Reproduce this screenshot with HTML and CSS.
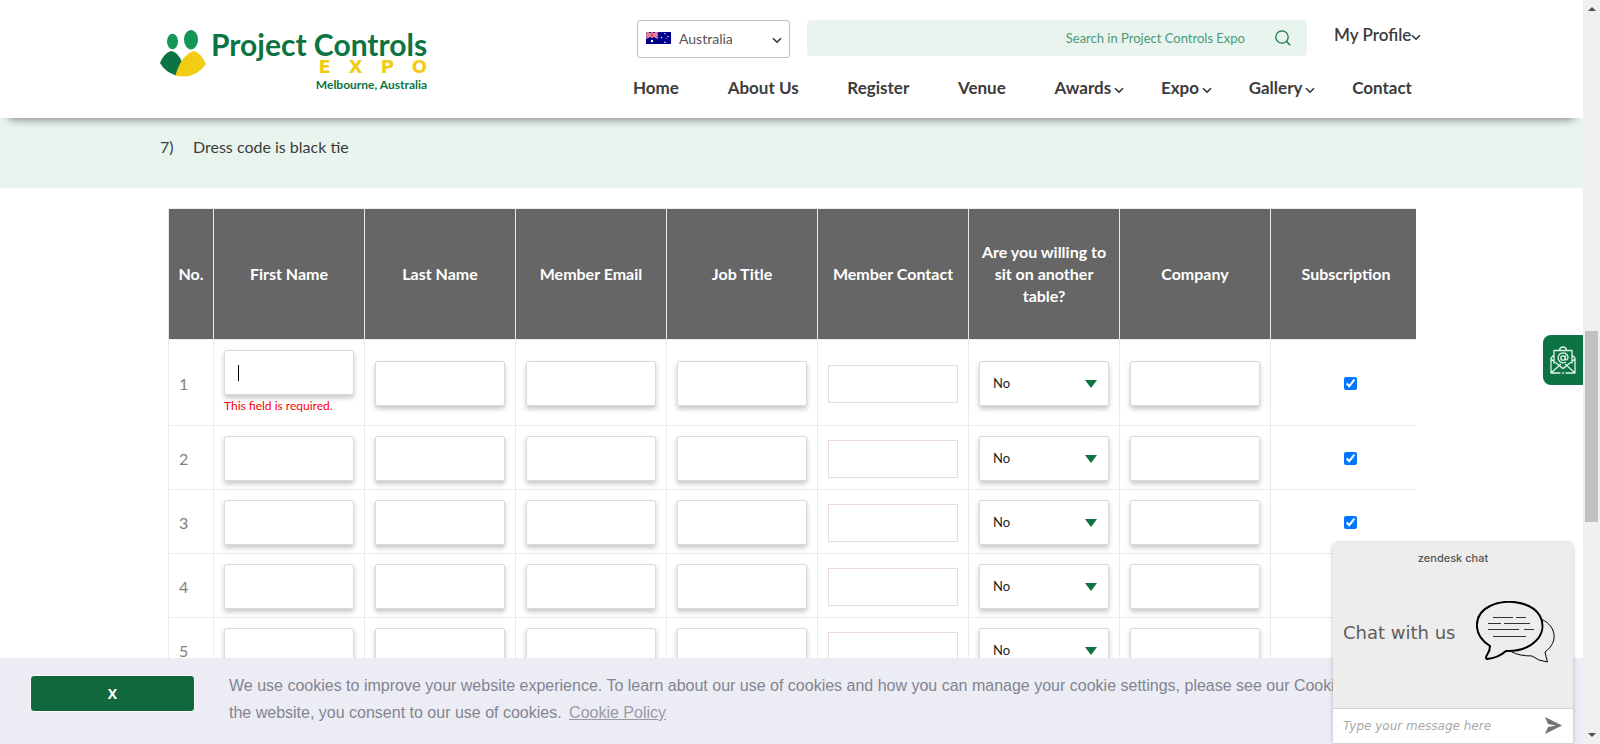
FILE: index.html
```html
<!DOCTYPE html>
<html lang="en">
<head>
<meta charset="utf-8">
<title>Project Controls Expo - Melbourne, Australia</title>
<link rel="stylesheet" href="styles.css">
</head>
<body>
<svg class="symbols" aria-hidden="true">
  <symbol id="chevron" viewBox="0 0 10 7"><path d="M1 1.2 5 5.2 9 1.2" fill="none" stroke="currentColor" stroke-width="1.6"/></symbol>
</svg>
<div class="page">
  <header class="header">
    <a class="logo" href="#">
      <svg class="logo-mark" viewBox="0 0 46 48" aria-hidden="true">
        <ellipse cx="12.5" cy="11.5" rx="5.5" ry="7.7" fill="#149657"/>
        <ellipse cx="31" cy="9.7" rx="7" ry="9.7" fill="#149657"/>
        <path d="M0 33Q4 23 11 21Q18 22 22 32L16 45.500Q5 42 0 33Z" fill="#0c7442"/>
        <path d="M15.500 45.500Q21 25 34 21Q41 23 46 34Q35 50 15.500 45.500Z" fill="#f2cb13"/>
      </svg>
      <span class="logo-text">
        <span class="logo-name">Project Controls</span>
        <span class="logo-expo"><span>E</span><span>X</span><span>P</span><span>O</span></span>
        <span class="logo-city">Melbourne, Australia</span>
      </span>
    </a>
    <div class="header-main">
      <div class="tools">
        <div class="country">
          <svg class="flag" viewBox="0 0 25 12" aria-hidden="true">
            <rect width="25" height="12" fill="#00008b"/>
            <path d="M0 0 12 6M12 0 0 6" stroke="#fff" stroke-width="1.600"/>
            <path d="M0 0 12 6M12 0 0 6" stroke="#e4002b" stroke-width=".7"/>
            <path d="M6 0V6M0 3H12" stroke="#fff" stroke-width="2.200"/>
            <path d="M6 0V6M0 3H12" stroke="#e4002b" stroke-width="1.200"/>
            <circle cx="6" cy="9" r="1.200" fill="#fff"/>
            <g fill="#fff"><circle cx="19" cy="1.800" r=".7"/><circle cx="15.500" cy="5.500" r=".7"/><circle cx="22" cy="4.500" r=".7"/><circle cx="19" cy="10.300" r=".8"/><circle cx="20.300" cy="6.500" r=".4"/></g>
          </svg>
          <select class="country-select" aria-label="Country"><option>Australia</option></select>
          <svg class="country-chevron chevron" aria-hidden="true"><use href="#chevron"/></svg>
        </div>
        <form class="search">
          <input class="search-input" type="text" placeholder="Search in Project Controls Expo" aria-label="Search">
          <button class="search-button" type="button" aria-label="Search">
            <svg viewBox="0 0 16 16" width="16" height="16"><circle cx="7" cy="7" r="6.200" fill="none" stroke="#0c7442" stroke-width="1.200"/><path d="M11.500 11.500 15.300 15.300" stroke="#0c7442" stroke-width="1.300"/></svg>
          </button>
        </form>
        <a class="profile" href="#">My Profile<svg class="chevron"><use href="#chevron"/></svg></a>
      </div>
      <nav class="nav">
        <a href="#">Home</a>
        <a href="#">About Us</a>
        <a href="#">Register</a>
        <a href="#">Venue</a>
        <a class="has-menu" href="#">Awards<svg class="chevron"><use href="#chevron"/></svg></a>
        <a class="has-menu" href="#">Expo<svg class="chevron"><use href="#chevron"/></svg></a>
        <a class="has-menu" href="#">Gallery<svg class="chevron"><use href="#chevron"/></svg></a>
        <a href="#">Contact</a>
      </nav>
    </div>
  </header>

  <section class="notes">
    <ol class="notes-list"><li><span class="notes-number">7)</span>Dress code is black tie</li></ol>
  </section>

  <main class="content">
    <table class="members">
      <colgroup><col class="col-no"><col class="col-field" span="7"><col></colgroup>
      <thead>
        <tr><th>No.</th><th>First Name</th><th>Last Name</th><th>Member Email</th><th>Job Title</th><th>Member Contact</th><th>Are you willing to sit on another table?</th><th>Company</th><th class="subscribe-head">Subscription</th></tr>
      </thead>
      <tbody>
        <tr>
          <td>1</td>
          <td><div class="focused"><input class="field" type="text" aria-label="First name 1" aria-describedby="error-1"><span class="caret"></span></div><p class="error" id="error-1">This field is required.</p></td>
          <td><input class="field" type="text" aria-label="Last name 1"></td>
          <td><input class="field" type="email" aria-label="Member email 1"></td>
          <td><input class="field" type="text" aria-label="Job title 1"></td>
          <td><input class="contact" type="tel" aria-label="Member contact 1"></td>
          <td><div class="choice"><select class="field" aria-label="Sit on another table 1"><option>No</option><option>Yes</option></select></div></td>
          <td><input class="field" type="text" aria-label="Company 1"></td>
          <td class="subscribe"><input type="checkbox" checked aria-label="Subscription 1"></td>
        </tr>
        <tr>
          <td>2</td>
          <td><input class="field" type="text" aria-label="First name 2"></td>
          <td><input class="field" type="text" aria-label="Last name 2"></td>
          <td><input class="field" type="email" aria-label="Member email 2"></td>
          <td><input class="field" type="text" aria-label="Job title 2"></td>
          <td><input class="contact" type="tel" aria-label="Member contact 2"></td>
          <td><div class="choice"><select class="field" aria-label="Sit on another table 2"><option>No</option><option>Yes</option></select></div></td>
          <td><input class="field" type="text" aria-label="Company 2"></td>
          <td class="subscribe"><input type="checkbox" checked aria-label="Subscription 2"></td>
        </tr>
        <tr>
          <td>3</td>
          <td><input class="field" type="text" aria-label="First name 3"></td>
          <td><input class="field" type="text" aria-label="Last name 3"></td>
          <td><input class="field" type="email" aria-label="Member email 3"></td>
          <td><input class="field" type="text" aria-label="Job title 3"></td>
          <td><input class="contact" type="tel" aria-label="Member contact 3"></td>
          <td><div class="choice"><select class="field" aria-label="Sit on another table 3"><option>No</option><option>Yes</option></select></div></td>
          <td><input class="field" type="text" aria-label="Company 3"></td>
          <td class="subscribe"><input type="checkbox" checked aria-label="Subscription 3"></td>
        </tr>
        <tr>
          <td>4</td>
          <td><input class="field" type="text" aria-label="First name 4"></td>
          <td><input class="field" type="text" aria-label="Last name 4"></td>
          <td><input class="field" type="email" aria-label="Member email 4"></td>
          <td><input class="field" type="text" aria-label="Job title 4"></td>
          <td><input class="contact" type="tel" aria-label="Member contact 4"></td>
          <td><div class="choice"><select class="field" aria-label="Sit on another table 4"><option>No</option><option>Yes</option></select></div></td>
          <td><input class="field" type="text" aria-label="Company 4"></td>
          <td class="subscribe"><input type="checkbox" checked aria-label="Subscription 4"></td>
        </tr>
        <tr>
          <td>5</td>
          <td><input class="field" type="text" aria-label="First name 5"></td>
          <td><input class="field" type="text" aria-label="Last name 5"></td>
          <td><input class="field" type="email" aria-label="Member email 5"></td>
          <td><input class="field" type="text" aria-label="Job title 5"></td>
          <td><input class="contact" type="tel" aria-label="Member contact 5"></td>
          <td><div class="choice"><select class="field" aria-label="Sit on another table 5"><option>No</option><option>Yes</option></select></div></td>
          <td><input class="field" type="text" aria-label="Company 5"></td>
          <td class="subscribe"><input type="checkbox" checked aria-label="Subscription 5"></td>
        </tr>
      </tbody>
    </table>
  </main>

  <button class="mail-tab" type="button" aria-label="Subscribe by email">
    <svg viewBox="0 0 26 29" width="26" height="29" fill="none" stroke="#e2f2ea" stroke-width="1.300" stroke-linejoin="round" stroke-linecap="round">
      <path d="M4 17V4.500H22V17M9.500 4Q10 1 13 1T16.500 4M4 9 1 12V27H10M16 27H25V12L22 9M1 13 10.500 20.500M25 13 15.500 20.500M1.500 26.500 10.500 18.500M24.500 26.500 15.500 18.500M10.500 20.500Q13 24 15.500 20.500M12.500 27H13.500"/>
      <circle cx="13" cy="12" r="2.200"/><path d="M15.200 9.800V12.500Q15.500 14.300 17 13.700Q18.300 12.500 18 11A5 5 0 1 0 15.500 16.300"/>
    </svg>
  </button>

  <div class="cookies">
    <button class="cookies-close" type="button">X</button>
    <p class="cookies-text">We use cookies to improve your website experience. To learn about our use of cookies and how you can manage your cookie settings, please see our Cookie Policy. By continuing to use the website, you consent to our use of cookies. <a class="cookies-link" href="#">Cookie Policy</a></p>
  </div>

  <aside class="chat">
    <div class="chat-brand">zendesk chat</div>
    <div class="chat-body">
      <span>Chat with us</span>
      <svg viewBox="0 0 80 64" width="80" height="64" fill="none" stroke="#000" aria-hidden="true">
        <path d="M66 18.500C80 25 83 41 69 51Q70 56 71.500 61Q62 60 56 55Q43 55 35 50.500" stroke-width="1"/>
        <path d="M14 45C-4 34-3 13 14 5C31-3 56 1 64 15C73 33 56 51 30 50Q22 57 11 58Q9 57 11 54Q14 50 14 45Z" stroke-width="2" fill="#ededed"/>
        <path d="M17 16.500H37M40 16.500H50M12 22.500H25M28 22.500H54M12 28.500H43M48 28.500H58M17 35.500H50" stroke-width="1.200" stroke="#333"/>
      </svg>
    </div>
    <form class="chat-form">
      <input class="chat-input" type="text" placeholder="Type your message here" aria-label="Message">
      <button class="chat-send" type="button" aria-label="Send"><svg viewBox="0 0 17 17" width="17" height="17"><path d="M0 0 17 8.500 0 17 3 10 11 8.500 3 7Z" fill="#737373"/></svg></button>
    </form>
  </aside>
</div>
<div class="scrollbar" aria-hidden="true">
  <span class="arrow arrow-up"></span>
  <span class="thumb"></span>
  <span class="arrow arrow-down"></span>
</div>
</body>
</html>
```

FILE: styles.css
```css
* { box-sizing: border-box; }
body {
  margin: 0;
  display: flex;
  height: 100vh;
  overflow: hidden;
  background: #fff;
  color: #3c3c3c;
  font-family: Lato, "Liberation Sans", sans-serif;
  font-size: 16px;
}
a { color: inherit; text-decoration: none; }
input, select, button { font-family: inherit; margin: 0; }
.symbols { display: none; }
.page { position: relative; flex: 1; min-width: 0; overflow: hidden; }

.header {
  position: relative;
  z-index: 2;
  display: flex;
  justify-content: space-between;
  height: 118px;
  padding: 20px 159px 0 160px;
  background: #fff;
  box-shadow: 0 10px 9px -9px rgba(0, 0, 0, .5);
}
.logo { display: flex; align-items: flex-start; gap: 5px; padding-top: 10px; color: #0c7442; }
.logo-mark { width: 46px; height: 48px; }
.logo-text { display: flex; flex-direction: column; align-items: flex-end; }
.logo-name { font-size: 30px; line-height: 29px; font-weight: 700; }
.logo-expo {
  display: flex;
  gap: 18px;
  color: #f2cb13;
  font: 700 18px/15px "DejaVu Sans", sans-serif;
}
.logo-city { font-size: 12px; line-height: 22px; font-weight: 700; }

.header-main { width: 791px; }
.tools { display: flex; align-items: flex-start; height: 38px; margin-left: 4px; }
.country { position: relative; width: 153px; height: 38px; }
.flag { position: absolute; left: 9px; top: 12px; width: 25px; height: 12px; }
.country-select {
  appearance: none;
  width: 100%;
  height: 38px;
  padding: 0 24px 1px 41px;
  border: 1px solid #bfbfbf;
  border-radius: 3px;
  background: transparent;
  color: #555;
  font-size: 14px;
}
.chevron { width: 10px; height: 7px; color: #333; }
.country-chevron { position: absolute; right: 8px; top: 17px; }
.search {
  display: flex;
  align-items: center;
  width: 500px;
  height: 36px;
  margin-left: 17px;
  padding-right: 16px;
  border-radius: 4px;
  background: #eaf4ef;
}
.search-input {
  flex: 1;
  border: 0;
  background: none;
  padding: 0 30px 0 0;
  text-align: right;
  font-size: 13px;
}
.search-input::placeholder { color: #4a9b75; opacity: 1; }
.search-button { display: flex; padding: 0; border: 0; background: none; }
.profile { margin-left: 27px; font-size: 17px; line-height: 30px; font-weight: 600; white-space: nowrap; }
.nav { display: flex; justify-content: space-between; margin: 18px 12px 0 0; font-size: 17px; line-height: 24px; font-weight: 700; white-space: nowrap; }
.has-menu { margin-right: -12px; }
.has-menu .chevron { margin-left: 3px; }

.notes { height: 70px; padding: 17px 160px; background: #eaf4ef; }
.notes-list { margin: 0; padding: 0; list-style: none; line-height: 24px; }
.notes-number { display: inline-block; width: 33px; }

.content { padding: 20px 167px 0 168px; }
.members { width: 100%; table-layout: fixed; border-collapse: separate; border-spacing: 0; border-top: 1px solid #ebebeb; }
.col-no { width: 45px; }
.col-field { width: 151px; }
.members th, .members td { border-left: 1px solid #ebebeb; border-bottom: 1px solid #ebebeb; }
.members th {
  height: 131px;
  padding: 8px;
  background: #666;
  color: #fff;
  font-weight: 700;
  line-height: 22px;
}
.members .subscribe-head { padding-left: 13px; }
.members td { height: 64px; padding: 10px 10px 8px; color: #808080; line-height: 18px; vertical-align: middle; }
.members tbody tr:first-child td { height: 86px; }
.field, .contact { display: block; width: 100%; background: #fff; }
.field {
  appearance: none;
  height: 45px;
  padding: 0 13px;
  border: 1px solid #dadada;
  border-radius: 2px;
  box-shadow: 0 3px 5px rgba(0, 0, 0, .22);
  color: #222;
  font-size: 13px;
}
select.field { padding-bottom: 2px; }
.members .contact { height: 38px; border: 1px solid #eadadd; }
.focused, .choice { position: relative; }
.caret { position: absolute; left: 14px; top: 15px; width: 1px; height: 16px; background: #000; }
.choice::after {
  content: "";
  position: absolute;
  right: 12px;
  top: 19px;
  border: 6px solid transparent;
  border-top: 8px solid #0c7442;
  border-bottom: 0;
}
.error { margin: 2px 0; color: #f00; font-size: 12px; line-height: 18px; }
.members .subscribe { text-align: center; padding-left: 23px; }
.subscribe input { width: 13px; height: 13px; }

.mail-tab {
  position: absolute;
  right: 0;
  top: 335px;
  display: flex;
  width: 40px;
  height: 50px;
  padding: 11px 7px;
  border: 0;
  border-radius: 8px 0 0 8px;
  background: #0c7442;
}
.cookies {
  position: absolute;
  left: 0;
  right: 0;
  bottom: 0;
  display: flex;
  align-items: flex-start;
  gap: 34px;
  height: 86px;
  padding: 14px 20px 0 30px;
  background: #ecedf4;
}
.cookies-close {
  flex: none;
  width: 165px;
  height: 37px;
  margin-top: 3px;
  border: 1px solid #fff;
  border-radius: 4px;
  background: #10683c;
  color: #fff;
  font: 700 14px "Open Sans", sans-serif;
}
.cookies-text { margin: 0; color: #838391; font: 16px/27px "Liberation Sans", Arial, sans-serif; }
.cookies-link { margin-left: 3px; color: #9a9aa6; text-decoration: underline; }

.chat {
  position: absolute;
  right: 10px;
  bottom: 0;
  display: flex;
  flex-direction: column;
  width: 240px;
  height: 201px;
  border-radius: 5px 5px 0 0;
  background: #ededed;
  box-shadow: 0 0 4px rgba(0, 0, 0, .25);
}
.chat-brand { padding-top: 7px; color: #555; text-align: center; font: 500 11px/16px Inter, sans-serif; }
.chat-body { display: flex; flex: 1; align-items: center; justify-content: space-between; padding: 0 17px 8px 10px; color: #5e5e5e; font: 18px/24px "DejaVu Sans", sans-serif; }
.chat-form { display: flex; align-items: center; height: 36px; padding: 0 11px 2px 10px; border-top: 1px solid #d2d2d2; border-bottom: 1px solid #d2d2d2; background: #fff; }
.chat-input { flex: 1; min-width: 0; padding: 2px 0 0; border: 0; font: italic 12px "DejaVu Sans", sans-serif; }
.chat-input::placeholder { color: #a9a9a9; opacity: 1; }
.chat-send { display: flex; padding: 0; border: 0; background: none; }

.scrollbar { display: flex; flex-direction: column; align-items: center; width: 17px; background: #f0f0f0; }
.thumb { width: 13px; height: 191px; margin: 320px 0 auto; background: #c1c1c1; }
.arrow { border: 4px solid transparent; }
.arrow-up { margin-top: 7px; border-top: 0; border-bottom-color: #505050; }
.arrow-down { margin-bottom: 7px; border-bottom: 0; border-top-color: #505050; }
```
